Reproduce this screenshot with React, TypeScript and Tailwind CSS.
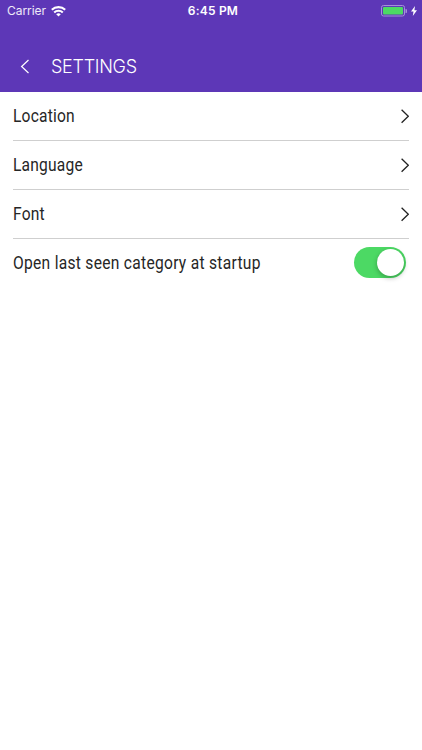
import React, { useState } from 'react'

const LINKS = ['Location', 'Language', 'Font']

function StatusBar() {
  return (
    <div className="flex h-[22px] items-center justify-between pl-[7px] pr-[5px] font-['Inter','Liberation_Sans',sans-serif] text-[12px] leading-none">
      <div className="flex w-[120px] items-center gap-[5px]">
        <span className="tracking-[-0.05px] text-white/90">Carrier</span>
        <svg width="15" height="11" viewBox="0 0 15 11" fill="none" stroke="white" strokeWidth="2.1">
          <path d="M0.8 3.8a9.6 9.6 0 0 1 13.4 0" />
          <path d="M3.2 6.5a6.1 6.1 0 0 1 8.6 0" />
          <path d="M7.5 10.6 5.2 8.3a3.3 3.3 0 0 1 4.6 0z" fill="white" stroke="none" />
        </svg>
      </div>
      <span className="ml-[2px] font-semibold tracking-[0.2px]">6:45 PM</span>
      <div className="flex w-[120px] items-center justify-end gap-[4px]">
        <svg width="26" height="12" viewBox="0 0 26 12">
          <rect x="0.5" y="0.5" width="23" height="10.5" rx="2" fill="none" stroke="#a58fd9" />
          <rect x="2" y="2" width="20" height="7.5" rx="1" fill="#4cd964" />
          <path d="M24.5 4v4a2 2 0 0 0 0-4z" fill="#a58fd9" />
        </svg>
        <svg width="6" height="10" viewBox="0 0 6 10" fill="white">
          <path d="M4 0 0 5.6h2.5L1.8 10 6 4.2H3.4z" />
        </svg>
      </div>
    </div>
  )
}

function Chevron() {
  return (
    <svg width="9" height="15" viewBox="0 0 9 15" fill="none" stroke="#222" strokeWidth="1.3">
      <path d="M1.6 0.8 8.3 7.3 1.6 13.8" />
    </svg>
  )
}

export default function App() {
  const [openLast, setOpenLast] = useState(true)

  return (
    <div className="flex h-[750px] w-[422px] flex-col overflow-hidden bg-white">
      <header className="h-[92px] bg-[#5d37b7] text-white">
        <StatusBar />
        <div className="flex h-[70px] items-center pl-[20px] pt-[19px]">
          <button aria-label="Back" className="mr-[21px]">
            <svg width="10" height="16" viewBox="0 0 10 16" fill="none" stroke="white" strokeWidth="1.2">
              <path d="M8.5 1 1.6 7.5l6.9 6.5" />
            </svg>
          </button>
          <h1 className="pt-px font-['Inter','Liberation_Sans',sans-serif] text-[18px] font-light leading-none tracking-[-0.3px]">SETTINGS</h1>
        </div>
      </header>

      {/* Settings list */}
      <main className="pl-[12.5px] pr-[13px] font-['Roboto',sans-serif] text-[19px] text-[#262626]">
        {LINKS.map(label => (
          <button key={label} className="flex h-[49px] w-full items-center justify-between border-b border-[#cfcfcf]">
            <span className="origin-left scale-x-[0.82] pt-px tracking-[0.24px]">{label}</span>
            <Chevron />
          </button>
        ))}
        <div className="flex h-[49px] items-center justify-between pr-[3px]">
          <span className="origin-left scale-x-[0.82] whitespace-nowrap tracking-[0.35px]">Open last seen category at startup</span>
          <button
            role="switch"
            aria-checked={openLast}
            aria-label="Open last seen category at startup"
            onClick={() => setOpenLast(!openLast)}
            className={`mb-[3px] flex h-[31px] w-[52px] shrink-0 items-center rounded-full p-[2px] ${openLast ? 'justify-end bg-[#4cd964]' : 'justify-start bg-gray-200'}`}
          >
            <span className="size-[27px] rounded-full bg-white shadow-[0_2px_5px_rgba(0,0,0,0.28)]" />
          </button>
        </div>
      </main>
    </div>
  )
}
